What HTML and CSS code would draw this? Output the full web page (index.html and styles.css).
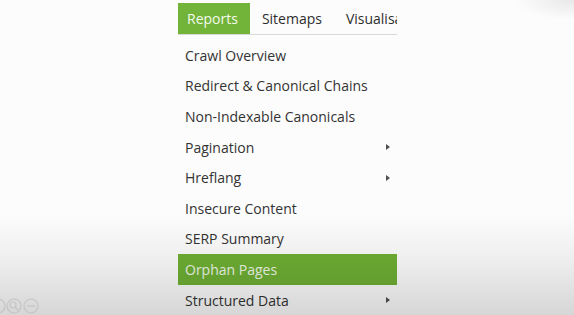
FILE: index.html
```html
<!DOCTYPE html>
<html lang="en">
    <head>
        <meta charset="UTF-8">
        <meta name="viewport" content="width=device-width, initial-scale=1.0">
        <title>Reports</title>
        <link rel="stylesheet" href="styles.css">
    </head>
    <body>
        <div id="App">
            <div id="Bar">
                <div class="Tab Active">Reports</div>
                <div class="Tab">Sitemaps</div>
                <div class="Tab">Visualisa</div>
            </div>
            <ul id="Menu">
                <li class="Item">Crawl Overview</li>
                <li class="Item">Redirect &amp; Canonical Chains</li>
                <li class="Item">Non-Indexable Canonicals</li>
                <li class="Item Sub">Pagination<span class="Arrow"></span></li>
                <li class="Item Sub">Hreflang<span class="Arrow"></span></li>
                <li class="Item">Insecure Content</li>
                <li class="Item">SERP Summary</li>
                <li class="Item Active">Orphan Pages</li>
                <li class="Item Sub">Structured Data<span class="Arrow"></span></li>
            </ul>
        </div>
        <div id="Shade"></div>
        <div id="Controls">
            <svg width="60" height="20" viewBox="0 0 60 20">
                <g fill="none" stroke="#c4c4c4" stroke-width="1.2">
                    <circle cx="-2" cy="12" r="7"/>
                    <circle cx="14" cy="12" r="7"/>
                    <circle cx="13" cy="11" r="3"/>
                    <line x1="15" y1="13" x2="18" y2="16"/>
                    <circle cx="31" cy="12" r="7"/>
                    <line x1="27" y1="12" x2="35" y2="12"/>
                </g>
            </svg>
        </div>
    </body>
</html>
```

FILE: styles.css
```css
* {
    margin: 0px;
    padding: 0px;
    box-sizing: border-box;
}
body {
    background-color: #FCFCFC;
    font-family: "Open Sans", "Noto Sans", sans-serif;
    height: 315px;
    overflow: hidden;
}
#App {
    margin-left: 178px;
    padding-top: 3px;
    width: 219px;
    #Bar {
        border-bottom: 1px solid #D8D8D8;
        display: flex;
        height: 32px;
        overflow: hidden;
        white-space: nowrap;
        .Tab {
            color: #2E2E2E;
            font-size: 14px;
            line-height: 31px;
            padding: 0px 12px;
        }
        .Tab.Active {
            background-color: #72B33A;
            color: #F4FAEE;
            padding-left: 9px;
        }
    }
    #Menu {
        list-style: none;
        padding-top: 5px;
        .Item {
            align-items: center;
            color: #333333;
            display: flex;
            font-size: 14px;
            height: 30.6px;
            justify-content: space-between;
            padding: 0px 7px 0px 7px;
        }
        .Item.Active {
            background-color: #6EAF34;
            color: #EEF7E6;
        }
        .Arrow {
            border-bottom: 3px solid transparent;
            border-left: 4px solid #505050;
            border-top: 3px solid transparent;
        }
    }
}
#Shade {
    background:
        radial-gradient(ellipse 60px 20px at 574px 0px, #00000014, #00000000),
        linear-gradient(to bottom, #00000000 215px, #0000000E 260px, #00000026 315px);
    height: 315px;
    left: 0px;
    pointer-events: none;
    position: fixed;
    top: 0px;
    width: 574px;
}
#Controls {
    bottom: -4px;
    left: 0px;
    position: fixed;
}
```
